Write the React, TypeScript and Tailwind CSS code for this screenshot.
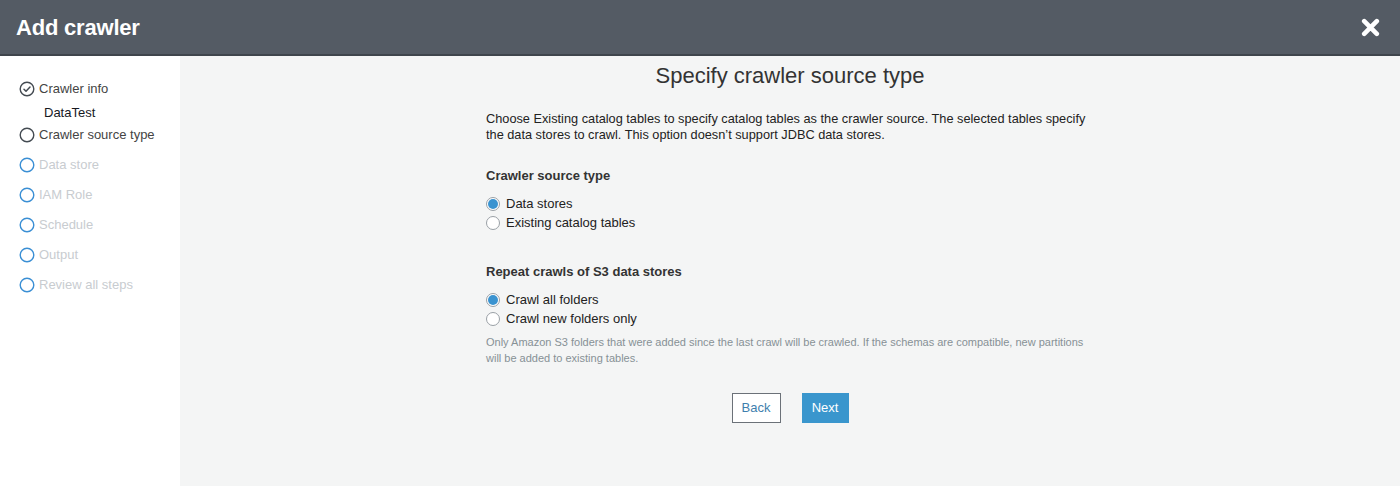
import React from 'react'

const steps = [
  { label: 'Data store' },
  { label: 'IAM Role' },
  { label: 'Schedule' },
  { label: 'Output' },
  { label: 'Review all steps' },
]

function StepCircle({ tone }: { tone: 'dark' | 'blue' }) {
  return (
    <svg width="16" height="16" viewBox="0 0 16 16" className="shrink-0">
      <circle
        cx="8"
        cy="8"
        r="6.8"
        fill="none"
        stroke={tone === 'dark' ? '#444b52' : '#3b8fd4'}
        strokeWidth="1.4"
      />
    </svg>
  )
}

function CheckCircle() {
  return (
    <svg width="16" height="16" viewBox="0 0 16 16" className="shrink-0">
      <circle cx="8" cy="8" r="6.8" fill="none" stroke="#444b52" strokeWidth="1.4" />
      <path d="M5 8.2l2 2 4-4.2" fill="none" stroke="#444b52" strokeWidth="1.5" strokeLinecap="round" strokeLinejoin="round" />
    </svg>
  )
}

function Radio({ checked, label }: { checked?: boolean; label: string }) {
  return (
    <label className="flex items-center h-[19px] gap-[6px] text-[13px] text-[#222]">
      <span
        className={
          checked
            ? 'w-[14px] h-[14px] rounded-full border border-[#9aa0a6] bg-white flex items-center justify-center'
            : 'w-[14px] h-[14px] rounded-full border border-[#9aa0a6] bg-white'
        }
      >
        {checked && <span className="w-[10px] h-[10px] rounded-full bg-[#3a93d0]" />}
      </span>
      {label}
    </label>
  )
}

export default function App() {
  return (
    <div className="w-[1400px] h-[486px] flex flex-col overflow-hidden font-['Liberation_Sans',Arial,sans-serif]">
      {/* Header */}
      <div className="h-[56px] shrink-0 bg-[#545b64] border-b-2 border-[#3f454c] flex items-center justify-between pl-[16px] pr-[20px]">
        <h1 className="text-[22px] font-bold text-white tracking-[-0.2px]">Add crawler</h1>
        <svg width="19" height="19" viewBox="0 0 19 19">
          <path d="M3.2 3.2l12.6 12.6M15.8 3.2L3.2 15.8" stroke="white" strokeWidth="4.6" strokeLinecap="round" />
        </svg>
      </div>

      <div className="flex flex-1">
        {/* Sidebar */}
        <div className="w-[180px] shrink-0 bg-white pt-[21px] pl-[19px] text-[13px]">
          <div className="flex items-center h-[24px] gap-[4px] text-[#444]">
            <CheckCircle />
            <span>Crawler info</span>
          </div>
          <div className="h-[19px] flex items-end pl-[25px] leading-[15px] text-[#16191f]">DataTest</div>
          <div className="flex items-center h-[30px] gap-[4px] text-[#444]">
            <StepCircle tone="dark" />
            <span>Crawler source type</span>
          </div>
          {steps.map((s) => (
            <div key={s.label} className="flex items-center h-[30px] gap-[4px] text-[#c8ccd0]">
              <StepCircle tone="blue" />
              <span>{s.label}</span>
            </div>
          ))}
        </div>

        {/* Main */}
        <div className="flex-1 bg-[#f4f5f5] pt-[7px]">
          <h2 className="text-center text-[22px] leading-[26px] text-[#333]">Specify crawler source type</h2>
          <div className="w-[608px] mx-auto">
            <p className="mt-[22px] text-[12.75px] leading-[16px] text-[#222]">
              Choose Existing catalog tables to specify catalog tables as the crawler source. The selected tables specify
              the data stores to crawl. This option doesn&rsquo;t support JDBC data stores.
            </p>

            <h3 className="mt-[25px] text-[13px] leading-[16px] font-bold text-[#333]">Crawler source type</h3>
            <div className="mt-[10px] flex flex-col">
              <Radio checked label="Data stores" />
              <Radio label="Existing catalog tables" />
            </div>

            <h3 className="mt-[32px] text-[13px] leading-[16px] font-bold text-[#333]">Repeat crawls of S3 data stores</h3>
            <div className="mt-[10px] flex flex-col">
              <Radio checked label="Crawl all folders" />
              <Radio label="Crawl new folders only" />
            </div>
            <p className="mt-[6px] text-[11px] leading-[16px] text-[#879196]">
              Only Amazon S3 folders that were added since the last crawl will be crawled. If the schemas are compatible, new partitions
              will be added to existing tables.
            </p>

            <div className="mt-[27px] flex justify-center gap-[21px]">
              <button className="h-[30px] w-[49px] bg-white border border-[#6b7178] text-[13px] text-[#3f7fae]">Back</button>
              <button className="h-[30px] w-[47px] bg-[#3a96cd] text-[13px] text-white">Next</button>
            </div>
          </div>
        </div>
      </div>
    </div>
  )
}
